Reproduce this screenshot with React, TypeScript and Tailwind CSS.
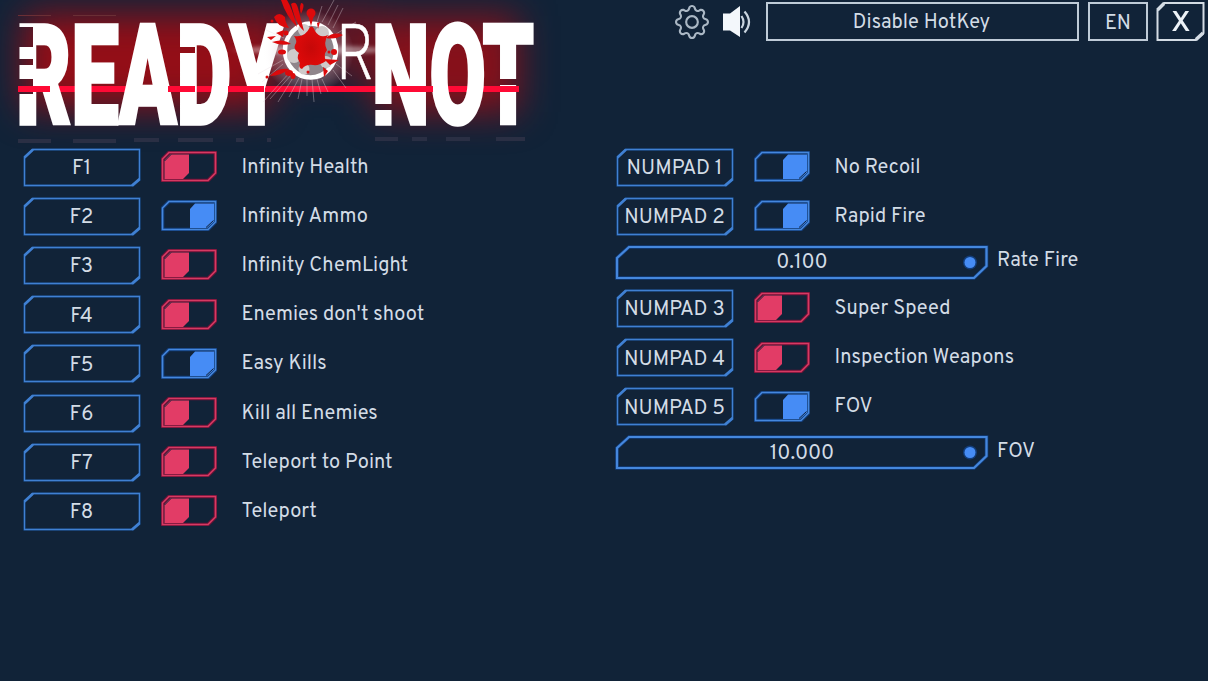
import type { ReactNode } from "react";
import { BsGear } from "react-icons/bs";

type Hack = { key: string; label: string; on: boolean };

const LEFT: Hack[] = [
  { key: "F1", label: "Infinity Health", on: false },
  { key: "F2", label: "Infinity Ammo", on: true },
  { key: "F3", label: "Infinity ChemLight", on: false },
  { key: "F4", label: "Enemies don't shoot", on: false },
  { key: "F5", label: "Easy Kills", on: true },
  { key: "F6", label: "Kill all Enemies", on: false },
  { key: "F7", label: "Teleport to Point", on: false },
  { key: "F8", label: "Teleport", on: false }
];

const FIRE: Hack[] = [
  { key: "NUMPAD 1", label: "No Recoil", on: true },
  { key: "NUMPAD 2", label: "Rapid Fire", on: true }
];

const MISC: Hack[] = [
  { key: "NUMPAD 3", label: "Super Speed", on: false },
  { key: "NUMPAD 4", label: "Inspection Weapons", on: false },
  { key: "NUMPAD 5", label: "FOV", on: true }
];

function KeyButton({ children }: { children: ReactNode }) {
  const frame = "M10 1.5H116.5V32L110 37.5H1.5V9Z";
  return (
    <button type="button" className="grid h-[39px] w-[118px] place-items-center">
      <svg viewBox="0 0 118 39" className="col-start-1 row-start-1 h-[39px] w-[118px]" fill="none" stroke="#4080d2">
        <path d={frame} stroke="#123866" strokeWidth="2.6" />
        <path d={frame} strokeWidth="1.3" />
        <path d="M1.5 9.5L10 1.5M116.5 31L109 37.5" strokeWidth="2.5" />
      </svg>
      <span className="col-start-1 row-start-1 pt-1 pr-px text-[20.5px] leading-6">{children}</span>
    </button>
  );
}

function Toggle({ on }: { on: boolean }) {
  const color = on ? "#468cf5" : "#e23c66";
  const frame = "M8 1.5H54.5V22L47 29.5H1.5V8Z";
  return (
    <svg viewBox="0 0 56 31" className="h-[31px] w-14 shrink-0" fill="none">
      <path d={frame} stroke={on ? "#123c78" : "#6d1236"} strokeWidth="3.6" />
      <path d={frame} stroke={on ? "#4587dd" : "#d63a63"} strokeWidth="1.6" />
      {on ? (
        <path d="M34 3.5H53V21.5L46 28H29V9Z" fill={color} />
      ) : (
        <path d="M9 3.5H28V22L22 28H3.5V9Z" fill={color} />
      )}
      <path d={on ? "M52.5 20.5L45 27.5" : "M3.5 10L10 3.5"} stroke="#10233a" />
    </svg>
  );
}

function HackRow({ hack }: { hack: Hack }) {
  return (
    <div className="flex h-[49.2px] items-center">
      <KeyButton>{hack.key}</KeyButton>
      <div className="ml-[19.5px] pb-px">
        <Toggle on={hack.on} />
      </div>
      <span className="ml-[25px] pt-px text-[20px] leading-6 tracking-[0.04px]">{hack.label}</span>
    </div>
  );
}

function SliderRow({ value, label }: { value: string; label: string }) {
  const frame = "M14 2H371.5V21L359 33H2V13Z";
  return (
    <div className="flex h-[43px] items-center">
      <div className="-ml-px grid h-[35px] w-[374px] place-items-center">
        <svg viewBox="0 0 374 35" className="col-start-1 row-start-1 h-[35px] w-[374px]" fill="none">
          <path d={frame} stroke="#123c78" strokeWidth="3.6" />
          <path d={frame} stroke="#4587dd" strokeWidth="2.2" />
          <circle cx="355" cy="17.5" r="7" fill="#123c78" />
          <circle cx="355" cy="17.5" r="5.5" fill="#468cf5" />
        </svg>
        <span className="col-start-1 row-start-1 pt-0.5 text-[20.5px] leading-6">{value}</span>
      </div>
      <span className="ml-2 pb-0.5 text-[20px] leading-6 tracking-[0.1px]">{label}</span>
    </div>
  );
}

function Logo() {
  return (
    <svg viewBox="0 0 580 146" className="h-[146px] w-[580px] overflow-visible" fontFamily="Roboto, sans-serif">
      <defs>
        <filter id="glow" filterUnits="userSpaceOnUse" x="-60" y="-60" width="700" height="280" colorInterpolationFilters="sRGB">
          <feGaussianBlur stdDeviation="18" />
        </filter>
        <filter id="soft" filterUnits="userSpaceOnUse" x="200" y="-20" width="240" height="150" colorInterpolationFilters="sRGB">
          <feGaussianBlur stdDeviation="6 2" />
        </filter>
        <radialGradient id="blood">
          <stop offset="0" stopColor="#c60808" />
          <stop offset="1" stopColor="#e00a0a" />
        </radialGradient>
        <radialGradient id="flash">
          <stop offset="0" stopColor="#fff" stopOpacity="0.7" />
          <stop offset="0.6" stopColor="#d8c8d0" stopOpacity="0.35" />
          <stop offset="1" stopColor="#fff" stopOpacity="0" />
        </radialGradient>
        {/* stencil cuts in the letters */}
        <mask id="cuts" maskUnits="userSpaceOnUse" x="0" y="0" width="580" height="146">
          <rect width="580" height="146" fill="#fff" />
          <rect x="10" y="27" width="23" height="20" />
          <rect x="10" y="59" width="23" height="6" />
          <rect x="10" y="79" width="23" height="15" />
          <rect x="172" y="47" width="23" height="6" />
          <rect x="366" y="104" width="26" height="6" />
          <rect x="496" y="79" width="28" height="6" />
        </mask>
      </defs>
      <g filter="url(#glow)" fill="#930e17">
        <rect x="24" y="14" width="246" height="94" />
        <rect x="270" y="4" width="106" height="72" opacity="0.6" />
        <rect x="374" y="16" width="144" height="96" opacity="0.9" />
      </g>
      <path d="M18 15.5H51M73 15.5H116" stroke="#6a2f35" />

      <rect x="18" y="86" width="501" height="6" fill="#ff0a35" />
      <g mask="url(#cuts)" fill="#fff" stroke="#fff" strokeWidth="3.5" fontWeight="900" fontSize="138.5">
        <text x="16" y="123.5" textLength="267" lengthAdjust="spacingAndGlyphs">READY</text>
        <text x="372" y="123.5" textLength="162" lengthAdjust="spacingAndGlyphs">NOT</text>
      </g>
      <path d="M18 89H50M168 89H195M228 89H264M392 89H433M490 89H519" stroke="#ff0a35" strokeWidth="6" />

      <ellipse cx="312" cy="50" rx="75" ry="4" fill="#fff" opacity="0.45" filter="url(#soft)" />
      <ellipse cx="308" cy="52" rx="46" ry="42" fill="url(#flash)" />
      <g stroke="#e8dde2" strokeWidth="0.9" opacity="0.4">
        <path d="M290 72L263 102M292 74L270 99M294 76L278 102M299 78L289 97M302 79L298 99M307 79L307 96M312 79L314 102M317 79L321 94M322 79L328 92M333 70L346 88M336 64L352 76M283 60L258 74M283 64L262 82M333 28L343 8M328 25L338 5M322 22L334 0M317 22L322 6M336 34L356 22M284 38L266 30" />
      </g>
      <text x="337" y="79" fill="#fff" stroke="#fff" strokeWidth="0.5" fontSize="78" fontWeight="300" textLength="36" lengthAdjust="spacingAndGlyphs">R</text>
      <ellipse cx="310.5" cy="50.5" rx="25.5" ry="27" fill="#8f858b" stroke="#fff" strokeWidth="4.5" />
      <g fill="#cfcaca">
        <circle cx="294" cy="56" r="7" />
        <circle cx="304" cy="30" r="6" />
        <circle cx="322" cy="33" r="7" />
        <circle cx="304" cy="69" r="5.5" />
        <circle cx="326" cy="62" r="6" />
      </g>
      <path
        d="M294 36Q305 38 310 27Q313 25 315 31Q320 39 328 35Q323 43 327 50Q323 55 326 61Q319 66 313 65Q306 64 302 69Q298 68 300 63Q296 57 299 53Q293 49 295 45Q298 41 294 36Z"
        fill="url(#blood)"
      />
      <g fill="#dc0a0c">
        <path d="M281 0L287 0Q292 8 297 27Q286 16 281 0ZM291 4Q296 0 298 8L304 31Q296 25 291 4ZM301 3Q306 3 301 14Q299 8 301 3Z" />
        <path d="M274 17Q279 11 285 17Q285 22 289 28Q277 27 274 17Z" />
        <circle cx="311" cy="13" r="4.5" />
        <path d="M308 15L311 26L314 15ZM272 42Q283 38 291 44Q280 46 272 42ZM267 37L276 36L271 40ZM326 38Q334 31 343 35Q335 40 326 38ZM270 76Q278 67 289 69Q281 76 270 76ZM324 59L339 60L330 65ZM317 23L320 22L318 29ZM276 33L284 30L283 37ZM323 67L328 71L324 77Z" />
        <ellipse cx="289" cy="73" rx="4" ry="3" />
        <ellipse cx="293" cy="76" rx="2.5" ry="3" />
        <ellipse cx="282" cy="52" rx="4" ry="2.5" />
        <circle cx="334" cy="52" r="3" />
        <circle cx="329" cy="52" r="1.5" />
        <circle cx="286" cy="33" r="2.5" />
        <circle cx="308" cy="72" r="1.5" />
        <circle cx="272" cy="21" r="1.5" />
        <circle cx="267" cy="77" r="1.5" />
      </g>
      <path
        d="M18 139H51V143H18ZM73 139H116V143H73ZM134 138H159V142H134ZM178 138H213V142H178ZM236 138H244V142H236ZM267 138H271V142H267ZM375 137H398V141H375ZM412 137H427V141H412ZM446 137H470V141H446ZM496 137H525V141H496Z"
        fill="#2a2f44"
      />
    </svg>
  );
}

function SpeakerIcon() {
  return (
    <svg viewBox="0 0 30 32" className="h-8 w-[30px]" fill="none" stroke="#c9d4df" strokeWidth="2.2">
      <path d="M1 7.5H8L18 0V31L8 24.5H1Z" fill="#f3f7fb" stroke="none" />
      <path d="M19.5 10Q23.5 16 19.5 22M22.5 5.5Q31.5 16 22.5 26.5" />
    </svg>
  );
}

export default function App() {
  return (
    <div className="h-[681px] w-[1208px] overflow-hidden bg-[#112338] font-['Overpass','Roboto',sans-serif] text-[#d3dce6]">
      <header className="flex h-[146px] items-start">
        <Logo />
        <div className="ml-[95px] flex items-start pt-0.5">
          <BsGear className="mt-[3px] size-[34px] text-[#aab7c4]" />
          <div className="ml-[13px] pt-1">
            <SpeakerIcon />
          </div>
          <button type="button" className="ml-3.5 h-[39px] w-[313px] border-2 border-[#bfcbd7] pt-0.5 pr-0.5 text-[20px] tracking-[0.06px]">
            Disable HotKey
          </button>
          <button type="button" className="ml-[9px] h-[39px] w-[60px] border-2 border-[#bfcbd7] pt-1 text-[20px]">
            EN
          </button>
          <button type="button" className="ml-2 grid h-[39px] w-[49px] place-items-center">
            <svg viewBox="0 0 49 39" className="col-start-1 row-start-1 h-[39px] w-[49px]" fill="none" stroke="#d4dce4">
              <path d="M8 1H47.5V31L40 38H1.5V8Z" strokeWidth="2" />
              <path d="M1.5 8L8 1.5M47 31L40 37.5" strokeWidth="3.5" />
            </svg>
            <span className="col-start-1 row-start-1 scale-x-115 pt-1 text-[28px] leading-7 font-medium text-[#edf2f7]">X</span>
          </button>
        </div>
      </header>
      <main className="flex">
        <section className="-mt-[3.5px] w-[593px] pl-[23px]">
          {LEFT.map((hack) => (
            <HackRow key={hack.key} hack={hack} />
          ))}
        </section>
        <section className="-mt-[3.5px] pl-[23px]">
          {FIRE.map((hack) => (
            <HackRow key={hack.key} hack={hack} />
          ))}
          <SliderRow value="0.100" label="Rate Fire" />
          {MISC.map((hack) => (
            <HackRow key={hack.key} hack={hack} />
          ))}
          <SliderRow value="10.000" label="FOV" />
        </section>
      </main>
    </div>
  );
}
